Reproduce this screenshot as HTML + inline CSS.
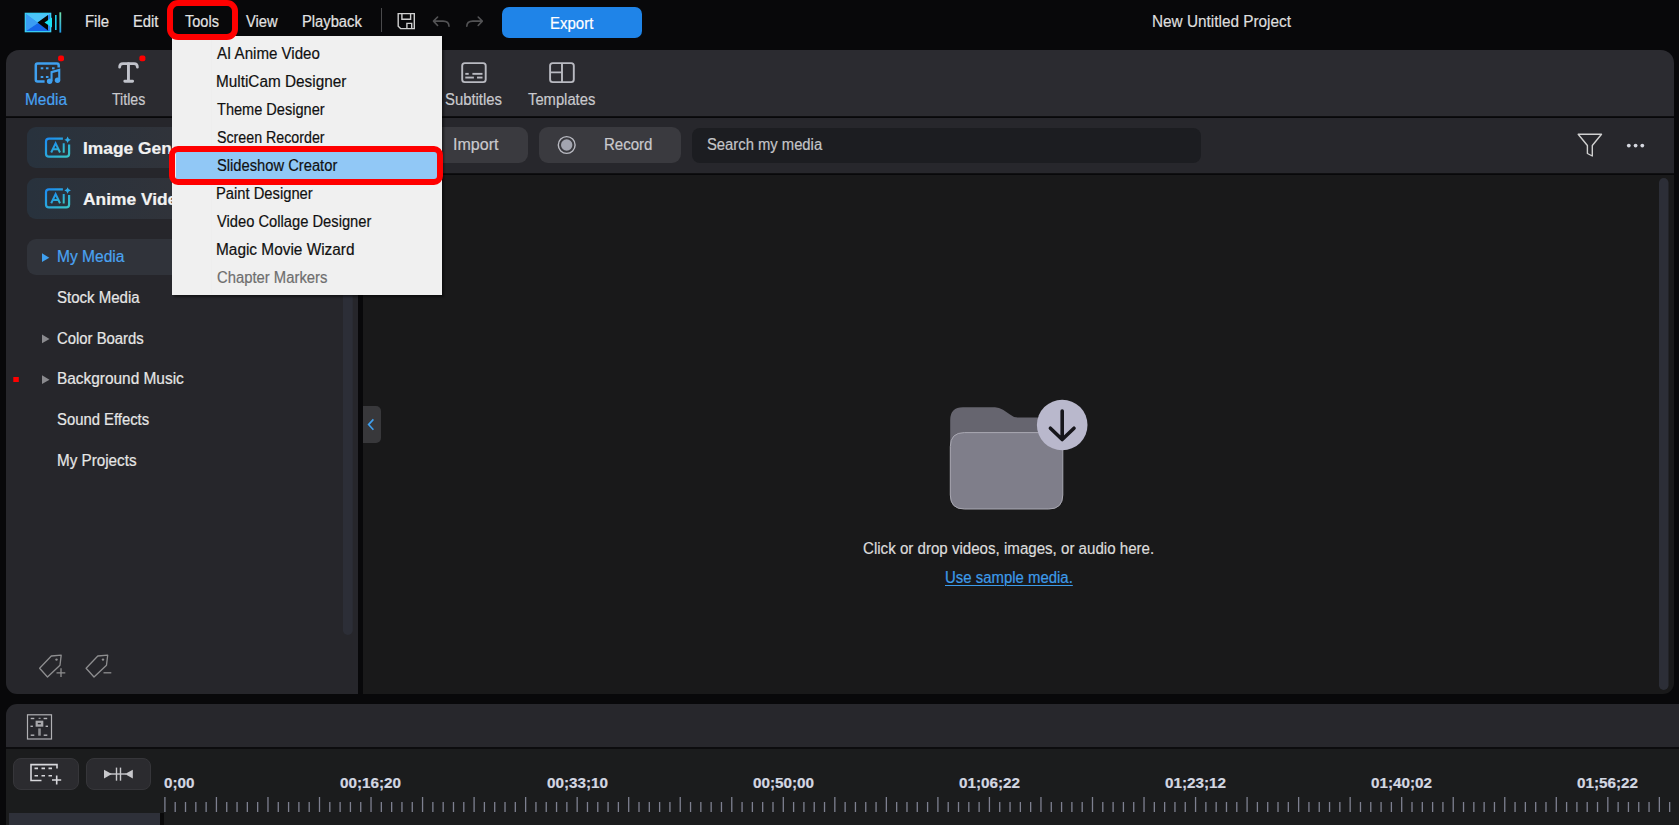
<!DOCTYPE html>
<html><head><meta charset="utf-8">
<style>
*{margin:0;padding:0;box-sizing:border-box}
html,body{width:1679px;height:825px;overflow:hidden;background:#08080a;font-family:"Liberation Sans",sans-serif}
.a{position:absolute}
.t{position:absolute;white-space:nowrap;line-height:1;z-index:2;-webkit-text-stroke:0.2px currentColor}
svg{position:absolute;overflow:visible}
</style></head><body>
<div class="a" style="left:0;top:0;width:1679px;height:50px;background:#08080a"></div>
<svg style="left:0;top:0" width="80" height="50">
  <defs>
    <linearGradient id="lg2" x1="0" y1="0" x2="0" y2="1"><stop offset="0" stop-color="#6ee0a8"/><stop offset="1" stop-color="#1e9be8"/></linearGradient>
  </defs>
  <rect x="25" y="13" width="26" height="19" fill="#2b8bf0"/>
  <polygon points="26,14 50,14 38,23" fill="#4cc4f8"/>
  <polygon points="26,31 50,31 38,23" fill="#1566e8"/>
  <polygon points="26,14 38,23 26,31" fill="#3a9df3"/>
  <rect x="25.3" y="13.3" width="25.4" height="18.4" fill="none" stroke="#3ad2f6" stroke-width="1.2"/>
  <polygon points="37.5,22.5 48,15 48,30.5" fill="#050505"/>
  <polygon points="44.5,22.5 52,17.5 52,27.5" fill="#18e2f2"/>
  <rect x="55" y="15" width="1.6" height="15" fill="#1fcfee"/>
  <rect x="59.4" y="12.3" width="1.8" height="20.3" fill="url(#lg2)"/>
</svg>
<div class="a" style="left:380.7px;top:8px;width:1.5px;height:24px;background:#4a4a4c"></div>
<svg style="left:0;top:0" width="500" height="50">
 <path d="M398.2,13.6 H414.3 V28.6 H400.6 L398.2,26.2 Z" fill="none" stroke="#cfcfcf" stroke-width="1.4"/>
 <path d="M401.9,13.6 V19.3 H410.6 V13.6" fill="none" stroke="#cfcfcf" stroke-width="1.4"/>
 <path d="M406.9,28.6 V23.4 H411.7 V28.6" fill="none" stroke="#cfcfcf" stroke-width="1.4"/>
 <path d="M449,26.3 C449,22.5 446.5,21.1 443,21.1 H433.8 M437.6,17 L433.5,21.1 L437.6,25.5" fill="none" stroke="#535355" stroke-width="1.6" stroke-linecap="round" stroke-linejoin="round"/>
 <path d="M466.8,26.3 C466.8,22.5 469.3,21.1 472.8,21.1 H482 M478.2,17 L482.3,21.1 L478.2,25.5" fill="none" stroke="#535355" stroke-width="1.6" stroke-linecap="round" stroke-linejoin="round"/>
</svg>
<div class="a" style="left:502px;top:7.4px;width:140px;height:30.8px;background:#1f84e8;border-radius:7px"></div>
<div class="a" style="left:6px;top:50px;width:1668px;height:67px;background:#2b2b30;border-radius:13px 13px 0 0"></div>
<div class="a" style="left:6px;top:115.8px;width:1668px;height:1.4px;background:#0e0e10"></div>
<div class="a" style="left:6px;top:117.5px;width:352px;height:576.5px;background:#26262b;border-radius:0 0 0 11px"></div>
<div class="a" style="left:358px;top:117.5px;width:5px;height:576.5px;background:#08080a"></div>
<div class="a" style="left:363px;top:117.5px;width:1311px;height:55.3px;background:#27272c"></div>
<div class="a" style="left:363px;top:172.7px;width:1311px;height:1.8px;background:#0f0f11"></div>
<div class="a" style="left:363px;top:174.5px;width:1311px;height:519.5px;background:#19191a;border-radius:0 0 11px 0"></div>
<svg style="left:0;top:0" width="700" height="120">
 <!-- media icon -->
 <path d="M44.6,81.4 H37.5 Q35.8,81.4 35.8,79.7 V65.3 Q35.8,63.6 37.5,63.6 H57 Q58.7,63.6 58.7,65.3 V67.5" fill="none" stroke="#3fa0ef" stroke-width="2.5"/>
 <g fill="#3fa0ef">
  <rect x="40.7" y="67.3" width="2.6" height="2"/><rect x="45.9" y="67.3" width="2.6" height="2"/><rect x="52" y="67.3" width="2.6" height="2"/>
  <rect x="40.7" y="76" width="2.6" height="2"/><rect x="45.9" y="76" width="2.6" height="2"/>
  <path d="M50.5,71.2 L60.3,68.6 V80.5 H58.2 V71.6 L52.6,73 V81.3 H50.5 Z"/>
  <circle cx="49.6" cy="81.2" r="2.7"/><circle cx="57.5" cy="80.3" r="2.7"/>
 </g>
 <rect x="58.1" y="55.6" width="5.9" height="5.7" rx="2" fill="#ff0000"/>
 <!-- T icon -->
 <path d="M119.6,67.2 Q119.6,63.7 123,63.7 H134 Q137.4,63.7 137.4,67.2" fill="none" stroke="#c1c3cb" stroke-width="2.7" stroke-linecap="round"/>
 <path d="M128.45,63.7 V81.2 M124.8,81.3 H132.6" fill="none" stroke="#c1c3cb" stroke-width="2.9" stroke-linecap="round"/>
 <rect x="139.4" y="55.4" width="6" height="5.8" rx="2" fill="#ff0000"/>
 <!-- subtitles -->
 <rect x="462.2" y="63.1" width="23.5" height="19" rx="2.6" fill="none" stroke="#b9bac1" stroke-width="1.9"/>
 <g fill="#b9bac1">
  <rect x="465.3" y="72.9" width="3.4" height="1.9"/><rect x="472.4" y="72.9" width="10.1" height="1.9"/>
  <rect x="465.3" y="76.6" width="8.6" height="1.9"/><rect x="477" y="76.6" width="5.5" height="1.9"/>
 </g>
 <!-- templates -->
 <rect x="550.1" y="63.1" width="23.7" height="19" rx="2.6" fill="none" stroke="#b9bac1" stroke-width="1.9"/>
 <path d="M562,63.1 V82.1 M550.1,72.4 H562" fill="none" stroke="#b9bac1" stroke-width="1.9"/>
</svg>
<div class="a" style="left:26.7px;top:127.3px;width:320px;height:40.5px;border-radius:9px;background:linear-gradient(90deg,#28323d 0%,#30333a 45%,#34353b 100%)"></div>
<svg style="left:0;top:0" width="100" height="230">
 <defs><linearGradient id="ai127" x1="0" y1="0" x2="1" y2="1"><stop offset="0" stop-color="#1b8cf2"/><stop offset="1" stop-color="#38c4c6"/></linearGradient></defs>
 <path d="M62.9,138.6 H49 Q46,138.6 46,141.6 V153.7 Q46,156.7 49,156.7 H66.1 Q69.1,156.7 69.1,153.7 V144.4" fill="none" stroke="url(#ai127)" stroke-width="2.2"/>
 <path d="M51.2,152.5 L55.6,143.3 L60,152.5 M52.9,149.2 H58.3 M63.7,143.3 V152.7" fill="none" stroke="url(#ai127)" stroke-width="2"/>
 <path d="M67.6,136.5 Q68.2,139.2 70.9,139.8 Q68.2,140.4 67.6,143.1 Q67,140.4 64.3,139.8 Q67,139.2 67.6,136.5 Z" fill="#2ea9e6"/>
</svg>
<div class="a" style="left:26.7px;top:178.0px;width:320px;height:40.5px;border-radius:9px;background:linear-gradient(90deg,#28323d 0%,#30333a 45%,#34353b 100%)"></div>
<svg style="left:0;top:0" width="100" height="230">
 <defs><linearGradient id="ai178" x1="0" y1="0" x2="1" y2="1"><stop offset="0" stop-color="#1b8cf2"/><stop offset="1" stop-color="#38c4c6"/></linearGradient></defs>
 <path d="M62.9,189.3 H49 Q46,189.3 46,192.3 V204.4 Q46,207.4 49,207.4 H66.1 Q69.1,207.4 69.1,204.4 V195.1" fill="none" stroke="url(#ai178)" stroke-width="2.2"/>
 <path d="M51.2,203.2 L55.6,194.0 L60,203.2 M52.9,199.9 H58.3 M63.7,194.0 V203.4" fill="none" stroke="url(#ai178)" stroke-width="2"/>
 <path d="M67.6,187.2 Q68.2,189.9 70.9,190.5 Q68.2,191.1 67.6,193.8 Q67,191.1 64.3,190.5 Q67,189.9 67.6,187.2 Z" fill="#2ea9e6"/>
</svg>
<div class="a" style="left:26.7px;top:239.2px;width:320px;height:35.7px;border-radius:9px;background:#30333a"></div>
<svg style="left:0;top:0" width="360" height="700">
 <path d="M42,253.3 L49.3,257.7 L42,262 Z" fill="#3fa0ef"/>
 <path d="M42,334.5 L49.5,338.9 L42,343.3 Z" fill="#8a8a8e"/>
 <path d="M42,375.3 L49.5,379.7 L42,384.1 Z" fill="#8a8a8e"/>
 <rect x="13.3" y="377" width="5.5" height="5" fill="#ff0000"/>
 <rect x="343" y="178" width="9.7" height="457" rx="4.8" fill="#2c2e37"/>
 <!-- tags -->
 <g fill="none" stroke="#8e8e90" stroke-width="1.3" stroke-linejoin="round">
  <path d="M39.6,668.3 L51.3,656 L61.2,655.2 L60,665.2 L47.5,677 Z"/>
  <path d="M86.1,668.3 L97.8,656 L107.7,655.2 L106.5,665.2 L94,677 Z"/>
  <path d="M56.5,672.8 H65.3 M61,668.3 V677"/>
  <path d="M103.5,672.8 H111.3"/>
 </g>
 <circle cx="56.5" cy="659.6" r="1.2" fill="#8e8e90"/>
 <circle cx="103" cy="659.6" r="1.2" fill="#8e8e90"/>
</svg>
<div class="a" style="left:363px;top:406px;width:18px;height:37px;background:#38383b;border-radius:0 5px 5px 0"></div>
<svg style="left:0;top:0" width="400" height="500"><path d="M373.4,419.4 L368.6,424.6 L373.4,429.8" fill="none" stroke="#3fa0ef" stroke-width="1.6"/></svg>
<div class="a" style="left:376px;top:127px;width:152.3px;height:36px;background:#3a3a3f;border-radius:9px"></div>
<div class="a" style="left:539.2px;top:127px;width:142px;height:36px;background:#3a3a3f;border-radius:9px"></div>
<div class="a" style="left:692.2px;top:127.9px;width:509px;height:34.7px;background:#1c1d21;border-radius:8px"></div>
<svg style="left:0;top:0" width="1679" height="200">
 <circle cx="566.7" cy="145" r="8.4" fill="none" stroke="#b9bac2" stroke-width="1.4"/>
 <circle cx="566.7" cy="145" r="5.7" fill="#a3a5b0"/>
 <path d="M1578.2,134.3 H1601.5 L1592.3,145.5 V156 L1587.4,153.5 V145.5 Z" fill="none" stroke="#d0d0d0" stroke-width="1.4" stroke-linejoin="round"/>
 <circle cx="1628.8" cy="145.6" r="1.9" fill="#d6d8e0"/><circle cx="1635.6" cy="145.6" r="1.9" fill="#d6d8e0"/><circle cx="1642.3" cy="145.6" r="1.9" fill="#d6d8e0"/>
 <rect x="1659" y="178" width="9.5" height="512" rx="4.7" fill="#2c2e37"/>
</svg>
<svg style="left:0;top:0" width="1679" height="600">
 <path d="M950.2,420 Q950.2,407.3 963,407.3 H995 Q999,407.3 1003,409.8 L1010,414.5 Q1013.5,417.6 1018,417.6 H1050 Q1062,417.6 1062,430 V495 Q1062,509 1048,509 H964 Q950.2,509 950.2,495 Z" fill="#66656f"/>
 <path d="M964.3,432.6 H1048.8 Q1062.8,432.6 1062.8,446.6 V495 Q1062.8,509 1048.8,509 H964.3 Q950.3,509 950.3,495 V446.6 Q950.3,432.6 964.3,432.6 Z" fill="#7f7e8a" stroke="#a9a8b2" stroke-width="1"/>
 <circle cx="1062.2" cy="425" r="25.3" fill="#b9b8cc"/>
 <path d="M1062.2,411 V438.5 M1050.4,428.2 L1062.2,439.5 L1074,428.2" fill="none" stroke="#16161b" stroke-width="3.6" stroke-linecap="round" stroke-linejoin="round"/>
</svg>
<div class="a" style="left:6px;top:703.7px;width:1690px;height:43.6px;background:#27272c;border-radius:11px 0 0 0"></div>
<div class="a" style="left:6px;top:747px;width:1690px;height:2px;background:#0c0c0e"></div>
<div class="a" style="left:6px;top:749px;width:1690px;height:80px;background:#1b1c1d"></div>
<div class="a" style="left:13px;top:757.8px;width:65.7px;height:32.7px;background:#2b2b2f;border:1px solid #36363a;border-radius:8px"></div>
<div class="a" style="left:85.8px;top:757.8px;width:65.5px;height:32.7px;background:#2b2b2f;border:1px solid #36363a;border-radius:8px"></div>
<div class="a" style="left:9px;top:813px;width:150.5px;height:12px;background:#2e3039"></div>
<div class="a" style="left:159.5px;top:813px;width:4.5px;height:12px;background:#0a0a0b"></div>
<svg style="left:0;top:0" width="1679" height="825"><g fill="#7e8090"><rect x="164.25" y="797.0" width="1.3" height="15.0"/><rect x="174.56" y="802.0" width="1.3" height="10.0"/><rect x="184.86" y="802.0" width="1.3" height="10.0"/><rect x="195.17" y="802.0" width="1.3" height="10.0"/><rect x="205.48" y="802.0" width="1.3" height="10.0"/><rect x="215.78" y="797.0" width="1.3" height="15.0"/><rect x="226.09" y="802.0" width="1.3" height="10.0"/><rect x="236.40" y="802.0" width="1.3" height="10.0"/><rect x="246.70" y="802.0" width="1.3" height="10.0"/><rect x="257.01" y="802.0" width="1.3" height="10.0"/><rect x="267.32" y="797.0" width="1.3" height="15.0"/><rect x="277.62" y="802.0" width="1.3" height="10.0"/><rect x="287.93" y="802.0" width="1.3" height="10.0"/><rect x="298.24" y="802.0" width="1.3" height="10.0"/><rect x="308.54" y="802.0" width="1.3" height="10.0"/><rect x="318.85" y="797.0" width="1.3" height="15.0"/><rect x="329.16" y="802.0" width="1.3" height="10.0"/><rect x="339.46" y="802.0" width="1.3" height="10.0"/><rect x="349.77" y="802.0" width="1.3" height="10.0"/><rect x="360.08" y="802.0" width="1.3" height="10.0"/><rect x="370.38" y="797.0" width="1.3" height="15.0"/><rect x="380.69" y="802.0" width="1.3" height="10.0"/><rect x="391.00" y="802.0" width="1.3" height="10.0"/><rect x="401.30" y="802.0" width="1.3" height="10.0"/><rect x="411.61" y="802.0" width="1.3" height="10.0"/><rect x="421.91" y="797.0" width="1.3" height="15.0"/><rect x="432.22" y="802.0" width="1.3" height="10.0"/><rect x="442.53" y="802.0" width="1.3" height="10.0"/><rect x="452.83" y="802.0" width="1.3" height="10.0"/><rect x="463.14" y="802.0" width="1.3" height="10.0"/><rect x="473.45" y="797.0" width="1.3" height="15.0"/><rect x="483.75" y="802.0" width="1.3" height="10.0"/><rect x="494.06" y="802.0" width="1.3" height="10.0"/><rect x="504.37" y="802.0" width="1.3" height="10.0"/><rect x="514.67" y="802.0" width="1.3" height="10.0"/><rect x="524.98" y="797.0" width="1.3" height="15.0"/><rect x="535.29" y="802.0" width="1.3" height="10.0"/><rect x="545.59" y="802.0" width="1.3" height="10.0"/><rect x="555.90" y="802.0" width="1.3" height="10.0"/><rect x="566.21" y="802.0" width="1.3" height="10.0"/><rect x="576.51" y="797.0" width="1.3" height="15.0"/><rect x="586.82" y="802.0" width="1.3" height="10.0"/><rect x="597.13" y="802.0" width="1.3" height="10.0"/><rect x="607.43" y="802.0" width="1.3" height="10.0"/><rect x="617.74" y="802.0" width="1.3" height="10.0"/><rect x="628.05" y="797.0" width="1.3" height="15.0"/><rect x="638.35" y="802.0" width="1.3" height="10.0"/><rect x="648.66" y="802.0" width="1.3" height="10.0"/><rect x="658.97" y="802.0" width="1.3" height="10.0"/><rect x="669.27" y="802.0" width="1.3" height="10.0"/><rect x="679.58" y="797.0" width="1.3" height="15.0"/><rect x="689.89" y="802.0" width="1.3" height="10.0"/><rect x="700.19" y="802.0" width="1.3" height="10.0"/><rect x="710.50" y="802.0" width="1.3" height="10.0"/><rect x="720.81" y="802.0" width="1.3" height="10.0"/><rect x="731.11" y="797.0" width="1.3" height="15.0"/><rect x="741.42" y="802.0" width="1.3" height="10.0"/><rect x="751.73" y="802.0" width="1.3" height="10.0"/><rect x="762.03" y="802.0" width="1.3" height="10.0"/><rect x="772.34" y="802.0" width="1.3" height="10.0"/><rect x="782.65" y="797.0" width="1.3" height="15.0"/><rect x="792.95" y="802.0" width="1.3" height="10.0"/><rect x="803.26" y="802.0" width="1.3" height="10.0"/><rect x="813.57" y="802.0" width="1.3" height="10.0"/><rect x="823.87" y="802.0" width="1.3" height="10.0"/><rect x="834.18" y="797.0" width="1.3" height="15.0"/><rect x="844.49" y="802.0" width="1.3" height="10.0"/><rect x="854.79" y="802.0" width="1.3" height="10.0"/><rect x="865.10" y="802.0" width="1.3" height="10.0"/><rect x="875.41" y="802.0" width="1.3" height="10.0"/><rect x="885.71" y="797.0" width="1.3" height="15.0"/><rect x="896.02" y="802.0" width="1.3" height="10.0"/><rect x="906.33" y="802.0" width="1.3" height="10.0"/><rect x="916.63" y="802.0" width="1.3" height="10.0"/><rect x="926.94" y="802.0" width="1.3" height="10.0"/><rect x="937.25" y="797.0" width="1.3" height="15.0"/><rect x="947.55" y="802.0" width="1.3" height="10.0"/><rect x="957.86" y="802.0" width="1.3" height="10.0"/><rect x="968.16" y="802.0" width="1.3" height="10.0"/><rect x="978.47" y="802.0" width="1.3" height="10.0"/><rect x="988.78" y="797.0" width="1.3" height="15.0"/><rect x="999.08" y="802.0" width="1.3" height="10.0"/><rect x="1009.39" y="802.0" width="1.3" height="10.0"/><rect x="1019.70" y="802.0" width="1.3" height="10.0"/><rect x="1030.00" y="802.0" width="1.3" height="10.0"/><rect x="1040.31" y="797.0" width="1.3" height="15.0"/><rect x="1050.62" y="802.0" width="1.3" height="10.0"/><rect x="1060.92" y="802.0" width="1.3" height="10.0"/><rect x="1071.23" y="802.0" width="1.3" height="10.0"/><rect x="1081.54" y="802.0" width="1.3" height="10.0"/><rect x="1091.84" y="797.0" width="1.3" height="15.0"/><rect x="1102.15" y="802.0" width="1.3" height="10.0"/><rect x="1112.46" y="802.0" width="1.3" height="10.0"/><rect x="1122.76" y="802.0" width="1.3" height="10.0"/><rect x="1133.07" y="802.0" width="1.3" height="10.0"/><rect x="1143.38" y="797.0" width="1.3" height="15.0"/><rect x="1153.68" y="802.0" width="1.3" height="10.0"/><rect x="1163.99" y="802.0" width="1.3" height="10.0"/><rect x="1174.30" y="802.0" width="1.3" height="10.0"/><rect x="1184.60" y="802.0" width="1.3" height="10.0"/><rect x="1194.91" y="797.0" width="1.3" height="15.0"/><rect x="1205.22" y="802.0" width="1.3" height="10.0"/><rect x="1215.52" y="802.0" width="1.3" height="10.0"/><rect x="1225.83" y="802.0" width="1.3" height="10.0"/><rect x="1236.14" y="802.0" width="1.3" height="10.0"/><rect x="1246.44" y="797.0" width="1.3" height="15.0"/><rect x="1256.75" y="802.0" width="1.3" height="10.0"/><rect x="1267.06" y="802.0" width="1.3" height="10.0"/><rect x="1277.36" y="802.0" width="1.3" height="10.0"/><rect x="1287.67" y="802.0" width="1.3" height="10.0"/><rect x="1297.98" y="797.0" width="1.3" height="15.0"/><rect x="1308.28" y="802.0" width="1.3" height="10.0"/><rect x="1318.59" y="802.0" width="1.3" height="10.0"/><rect x="1328.90" y="802.0" width="1.3" height="10.0"/><rect x="1339.20" y="802.0" width="1.3" height="10.0"/><rect x="1349.51" y="797.0" width="1.3" height="15.0"/><rect x="1359.82" y="802.0" width="1.3" height="10.0"/><rect x="1370.12" y="802.0" width="1.3" height="10.0"/><rect x="1380.43" y="802.0" width="1.3" height="10.0"/><rect x="1390.74" y="802.0" width="1.3" height="10.0"/><rect x="1401.04" y="797.0" width="1.3" height="15.0"/><rect x="1411.35" y="802.0" width="1.3" height="10.0"/><rect x="1421.66" y="802.0" width="1.3" height="10.0"/><rect x="1431.96" y="802.0" width="1.3" height="10.0"/><rect x="1442.27" y="802.0" width="1.3" height="10.0"/><rect x="1452.58" y="797.0" width="1.3" height="15.0"/><rect x="1462.88" y="802.0" width="1.3" height="10.0"/><rect x="1473.19" y="802.0" width="1.3" height="10.0"/><rect x="1483.49" y="802.0" width="1.3" height="10.0"/><rect x="1493.80" y="802.0" width="1.3" height="10.0"/><rect x="1504.11" y="797.0" width="1.3" height="15.0"/><rect x="1514.41" y="802.0" width="1.3" height="10.0"/><rect x="1524.72" y="802.0" width="1.3" height="10.0"/><rect x="1535.03" y="802.0" width="1.3" height="10.0"/><rect x="1545.33" y="802.0" width="1.3" height="10.0"/><rect x="1555.64" y="797.0" width="1.3" height="15.0"/><rect x="1565.95" y="802.0" width="1.3" height="10.0"/><rect x="1576.25" y="802.0" width="1.3" height="10.0"/><rect x="1586.56" y="802.0" width="1.3" height="10.0"/><rect x="1596.87" y="802.0" width="1.3" height="10.0"/><rect x="1607.17" y="797.0" width="1.3" height="15.0"/><rect x="1617.48" y="802.0" width="1.3" height="10.0"/><rect x="1627.79" y="802.0" width="1.3" height="10.0"/><rect x="1638.09" y="802.0" width="1.3" height="10.0"/><rect x="1648.40" y="802.0" width="1.3" height="10.0"/><rect x="1658.71" y="797.0" width="1.3" height="15.0"/><rect x="1669.01" y="802.0" width="1.3" height="10.0"/><rect x="1679.32" y="802.0" width="1.3" height="10.0"/></g>
 <g fill="none" stroke="#b0b0b4" stroke-width="1.2">
  <rect x="27.5" y="714.8" width="24" height="24.2"/>
 </g>
 <g fill="#b4b4b8">
  <rect x="30.7" y="717.8" width="3.6" height="1.4"/><rect x="38.6" y="717.8" width="2" height="1"/><rect x="43.6" y="717.8" width="3.6" height="1.4"/>
  <rect x="30.5" y="725.6" width="2.4" height="1.4"/><rect x="45.6" y="725.6" width="2.4" height="1.4"/>
  <rect x="30.7" y="734.5" width="3.6" height="1.4"/><rect x="43.7" y="734.5" width="3.6" height="1.4"/>
  <rect x="35.6" y="720.7" width="7.7" height="6" fill="#a8a8ac"/>
  <rect x="38.2" y="728.4" width="2.6" height="7.3" fill="#8c8c90"/>
 </g>
 <rect x="37.8" y="722.9" width="3" height="1.4" fill="#2a2a2e"/>
 <g fill="none" stroke="#d8d8dc" stroke-width="1.6">
  <path d="M41.5,780.5 H31 V764.6 H57 V768.5"/>
  <path d="M34.5,768.4 H38 M41.5,768.4 H45 M48.5,768.4 H52 M34.5,775.8 H38 M41.5,775.8 H45 M48.5,775.8 H52"/>
  <path d="M52,780 H61.2 M56.7,775.5 V784.5"/>
 </g>
 <g fill="#c8c8cc">
  <path d="M104,769.8 L111.8,774 L104,778.5 Z"/>
  <path d="M132.8,769.8 L125,774 L132.8,778.5 Z"/>
  <rect x="110" y="773.3" width="16" height="1.4"/>
  <rect x="115.8" y="767.6" width="1.4" height="13.1"/>
  <rect x="119.8" y="767.6" width="1.4" height="13.1"/>
 </g>
</svg>
<div class="a" style="left:172px;top:35.5px;width:270px;height:259.5px;background:#f0f0f0;box-shadow:2px 2px 2px rgba(0,0,0,0.45);z-index:10"></div>
<div class="a" style="left:210.5px;top:36px;width:1px;height:258px;background:#eeeeee;z-index:10"></div>
<div class="a" style="left:175.5px;top:152px;width:261.5px;height:27px;background:#91c8f6;z-index:10"></div>
<div class="a" style="left:169.3px;top:146.2px;width:273.4px;height:38.8px;border:6px solid #ff0000;border-radius:9px;z-index:12"></div>
<div class="a" style="left:167px;top:0px;width:71px;height:39.6px;border:6px solid #ff0000;border-radius:11px;z-index:12"></div>
<div class="t" id="t0" style="left:84.57px;top:14.00px;font-size:16px;font-weight:400;color:#e2e2e2;transform:scaleX(0.9324);transform-origin:0 0;">File</div>
<div class="t" id="t1" style="left:133.38px;top:14.00px;font-size:16px;font-weight:400;color:#e2e2e2;transform:scaleX(0.9217);transform-origin:0 0;">Edit</div>
<div class="t" id="t2" style="left:185.00px;top:14.00px;font-size:16px;font-weight:400;color:#e2e2e2;transform:scaleX(0.9076);transform-origin:0 0;">Tools</div>
<div class="t" id="t3" style="left:246.00px;top:14.00px;font-size:16px;font-weight:400;color:#e2e2e2;transform:scaleX(0.9186);transform-origin:0 0;">View</div>
<div class="t" id="t4" style="left:302.48px;top:14.00px;font-size:16px;font-weight:400;color:#e2e2e2;transform:scaleX(0.9211);transform-origin:0 0;">Playback</div>
<div class="t" id="t5" style="left:549.76px;top:15.50px;font-size:16px;font-weight:400;color:#ffffff;transform:scaleX(0.9367);transform-origin:0 0;">Export</div>
<div class="t" id="t6" style="left:1152.44px;top:14.00px;font-size:16px;font-weight:400;color:#dedede;transform:scaleX(0.9585);transform-origin:0 0;">New Untitled Project</div>
<div class="t" id="t7" style="left:24.53px;top:91.60px;font-size:16px;font-weight:400;color:#47a2f2;transform:scaleX(0.9653);transform-origin:0 0;">Media</div>
<div class="t" id="t8" style="left:111.50px;top:91.70px;font-size:16px;font-weight:400;color:#c9c9cd;transform:scaleX(0.8849);transform-origin:0 0;">Titles</div>
<div class="t" id="t9" style="left:445.00px;top:91.50px;font-size:16px;font-weight:400;color:#c9c9cd;transform:scaleX(0.9288);transform-origin:0 0;">Subtitles</div>
<div class="t" id="t10" style="left:527.60px;top:91.50px;font-size:16px;font-weight:400;color:#c9c9cd;transform:scaleX(0.9229);transform-origin:0 0;">Templates</div>
<div class="t" id="t11" style="left:82.62px;top:141.20px;font-size:16px;font-weight:700;color:#f2f2f2;transform:scaleX(1.0847);transform-origin:0 0;z-index:1">Image Generator</div>
<div class="t" id="t12" style="left:83.30px;top:191.70px;font-size:16px;font-weight:700;color:#f2f2f2;transform:scaleX(1.0853);transform-origin:0 0;">Anime Video</div>
<div class="t" id="t13" style="left:56.73px;top:249.20px;font-size:16px;font-weight:400;color:#4aa3f2;transform:scaleX(0.9729);transform-origin:0 0;">My Media</div>
<div class="t" id="t14" style="left:57.30px;top:289.80px;font-size:16px;font-weight:400;color:#e6e6e6;transform:scaleX(0.9383);transform-origin:0 0;">Stock Media</div>
<div class="t" id="t15" style="left:57.30px;top:330.70px;font-size:16px;font-weight:400;color:#e6e6e6;transform:scaleX(0.9285);transform-origin:0 0;">Color Boards</div>
<div class="t" id="t16" style="left:56.64px;top:371.20px;font-size:16px;font-weight:400;color:#e6e6e6;transform:scaleX(0.9631);transform-origin:0 0;">Background Music</div>
<div class="t" id="t17" style="left:57.20px;top:412.00px;font-size:16px;font-weight:400;color:#e6e6e6;transform:scaleX(0.9272);transform-origin:0 0;">Sound Effects</div>
<div class="t" id="t18" style="left:56.65px;top:452.60px;font-size:16px;font-weight:400;color:#e6e6e6;transform:scaleX(0.9519);transform-origin:0 0;">My Projects</div>
<div class="t" id="t19" style="left:453.20px;top:137.20px;font-size:16px;font-weight:400;color:#c9c9cd;transform:scaleX(1.0023);transform-origin:0 0;">Import</div>
<div class="t" id="t20" style="left:604.06px;top:137.20px;font-size:16px;font-weight:400;color:#c9c9cd;transform:scaleX(0.9400);transform-origin:0 0;">Record</div>
<div class="t" id="t21" style="left:707.30px;top:137.20px;font-size:16px;font-weight:400;color:#c4c4c8;transform:scaleX(0.9246);transform-origin:0 0;">Search my media</div>
<div class="t" id="t22" style="left:862.80px;top:541.20px;font-size:16px;font-weight:400;color:#dcdcdc;transform:scaleX(0.9435);transform-origin:0 0;">Click or drop videos, images, or audio here.</div>
<div class="t" id="t23" style="left:944.57px;top:570.20px;font-size:16px;font-weight:400;color:#3d9be9;transform:scaleX(0.9331);transform-origin:0 0;text-decoration:underline;text-decoration-thickness:1px;text-underline-offset:2px">Use sample media.</div>
<div class="t" id="t24" style="left:216.80px;top:46.20px;font-size:16px;font-weight:400;color:#111111;transform:scaleX(0.9419);transform-origin:0 0;z-index:11">AI Anime Video</div>
<div class="t" id="t25" style="left:215.84px;top:74.20px;font-size:16px;font-weight:400;color:#111111;transform:scaleX(0.9579);transform-origin:0 0;z-index:11">MultiCam Designer</div>
<div class="t" id="t26" style="left:216.80px;top:102.20px;font-size:16px;font-weight:400;color:#111111;transform:scaleX(0.9097);transform-origin:0 0;z-index:11">Theme Designer</div>
<div class="t" id="t27" style="left:216.80px;top:130.20px;font-size:16px;font-weight:400;color:#111111;transform:scaleX(0.8897);transform-origin:0 0;z-index:11">Screen Recorder</div>
<div class="t" id="t28" style="left:216.80px;top:158.20px;font-size:16px;font-weight:400;color:#111111;transform:scaleX(0.9201);transform-origin:0 0;z-index:11">Slideshow Creator</div>
<div class="t" id="t29" style="left:215.88px;top:186.20px;font-size:16px;font-weight:400;color:#111111;transform:scaleX(0.9215);transform-origin:0 0;z-index:11">Paint Designer</div>
<div class="t" id="t30" style="left:216.80px;top:214.20px;font-size:16px;font-weight:400;color:#111111;transform:scaleX(0.9200);transform-origin:0 0;z-index:11">Video Collage Designer</div>
<div class="t" id="t31" style="left:215.84px;top:242.20px;font-size:16px;font-weight:400;color:#111111;transform:scaleX(0.9618);transform-origin:0 0;z-index:11">Magic Movie Wizard</div>
<div class="t" id="t32" style="left:216.80px;top:270.20px;font-size:16px;font-weight:400;color:#6e6e6e;transform:scaleX(0.9266);transform-origin:0 0;z-index:11">Chapter Markers</div>
<div class="t" id="t33" style="left:164.10px;top:776.00px;font-size:14px;font-weight:700;color:#d3d7e2;transform:scaleX(1.0838);transform-origin:0 0;">0;00</div>
<div class="t" id="t34" style="left:340.43px;top:776.00px;font-size:14px;font-weight:700;color:#d3d7e2;transform:scaleX(1.0879);transform-origin:0 0;">00;16;20</div>
<div class="t" id="t35" style="left:546.56px;top:776.00px;font-size:14px;font-weight:700;color:#d3d7e2;transform:scaleX(1.0879);transform-origin:0 0;">00;33;10</div>
<div class="t" id="t36" style="left:752.69px;top:776.00px;font-size:14px;font-weight:700;color:#d3d7e2;transform:scaleX(1.0879);transform-origin:0 0;">00;50;00</div>
<div class="t" id="t37" style="left:958.82px;top:776.00px;font-size:14px;font-weight:700;color:#d3d7e2;transform:scaleX(1.0879);transform-origin:0 0;">01;06;22</div>
<div class="t" id="t38" style="left:1164.95px;top:776.00px;font-size:14px;font-weight:700;color:#d3d7e2;transform:scaleX(1.0879);transform-origin:0 0;">01;23;12</div>
<div class="t" id="t39" style="left:1371.08px;top:776.00px;font-size:14px;font-weight:700;color:#d3d7e2;transform:scaleX(1.0879);transform-origin:0 0;">01;40;02</div>
<div class="t" id="t40" style="left:1577.21px;top:776.00px;font-size:14px;font-weight:700;color:#d3d7e2;transform:scaleX(1.0879);transform-origin:0 0;">01;56;22</div>
</body></html>
